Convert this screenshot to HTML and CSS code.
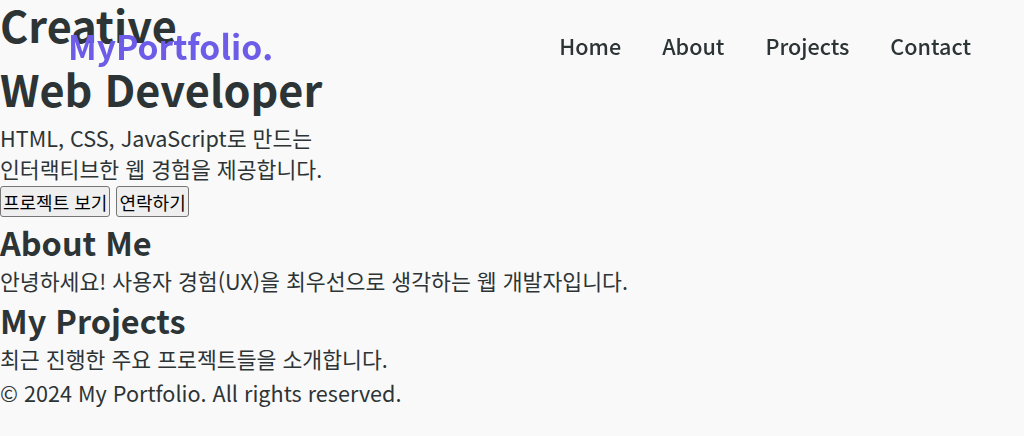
FILE: index.html
```html
<!DOCTYPE html>
<html lang="ko">
<head>
<meta charset="utf-8">
<title>My Portfolio</title>
<link rel="stylesheet" href="styles.css">
</head>
<body>
<header class="site-header">
  <div class="logo">MyPortfolio.</div>
  <nav>
    <ul class="nav-list">
      <li><a href="#home">Home</a></li>
      <li><a href="#about">About</a></li>
      <li><a href="#projects">Projects</a></li>
      <li><a href="#contact">Contact</a></li>
    </ul>
  </nav>
</header>
<main class="page">
  <section class="hero" id="home">
    <h1 class="hero-title">Creative<br>Web Developer</h1>
    <p class="hero-text">HTML, CSS, JavaScript로 만드는<br>인터랙티브한 웹 경험을 제공합니다.</p>
    <button class="btn">프로젝트 보기</button>
    <button class="btn">연락하기</button>
  </section>
  <section class="section" id="about">
    <h2 class="section-title">About Me</h2>
    <p class="section-text">안녕하세요! 사용자 경험(UX)을 최우선으로 생각하는 웹 개발자입니다.</p>
  </section>
  <section class="section" id="projects">
    <h2 class="section-title">My Projects</h2>
    <p class="section-text">최근 진행한 주요 프로젝트들을 소개합니다.</p>
  </section>
</main>
<footer class="site-footer" id="contact">
  <p class="footer-text">© 2024 My Portfolio. All rights reserved.</p>
</footer>
</body>
</html>
```

FILE: styles.css
```css
* {
  margin: 0;
  padding: 0;
  box-sizing: border-box;
}

body {
  font-family: "Noto Sans CJK KR", "Noto Sans", sans-serif;
  font-size: 21.6px;
  background: #f9f9f9;
  color: #2d3436;
}

.site-header {
  position: fixed;
  top: 0;
  left: 0;
  width: 100%;
  display: flex;
  justify-content: space-between;
  align-items: center;
  padding: 21px 53px 21px 68px;
}

.logo {
  font-size: 33.6px;
  font-weight: 700;
  color: #6c5ce7;
}

.nav-list {
  list-style: none;
  display: flex;
  gap: 41px;
}

.nav-list a {
  text-decoration: none;
  color: #2d3436;
  font-size: 21.6px;
  font-weight: 500;
}

.page {
  margin-top: -8px;
}

.hero {
  padding-bottom: 1px;
}

.hero-title {
  font-size: 43.2px;
  line-height: 64px;
  font-weight: 700;
}

.hero-text {
  font-size: 21.6px;
  margin-top: 2px;
}

.btn {
  font-family: inherit;
  font-size: 18px;
  color: #000;
  background: #efefef;
  border: 1px solid #767676;
  border-radius: 3px;
  padding: 1.6px 2px;
  margin-top: 2px;
}

.section-title {
  font-size: 32.4px;
  font-weight: 700;
}

.section-text {
  font-size: 21.6px;
}

.site-footer {
  padding-top: 3px;
}

.footer-text {
  font-size: 21.6px;
}
```
